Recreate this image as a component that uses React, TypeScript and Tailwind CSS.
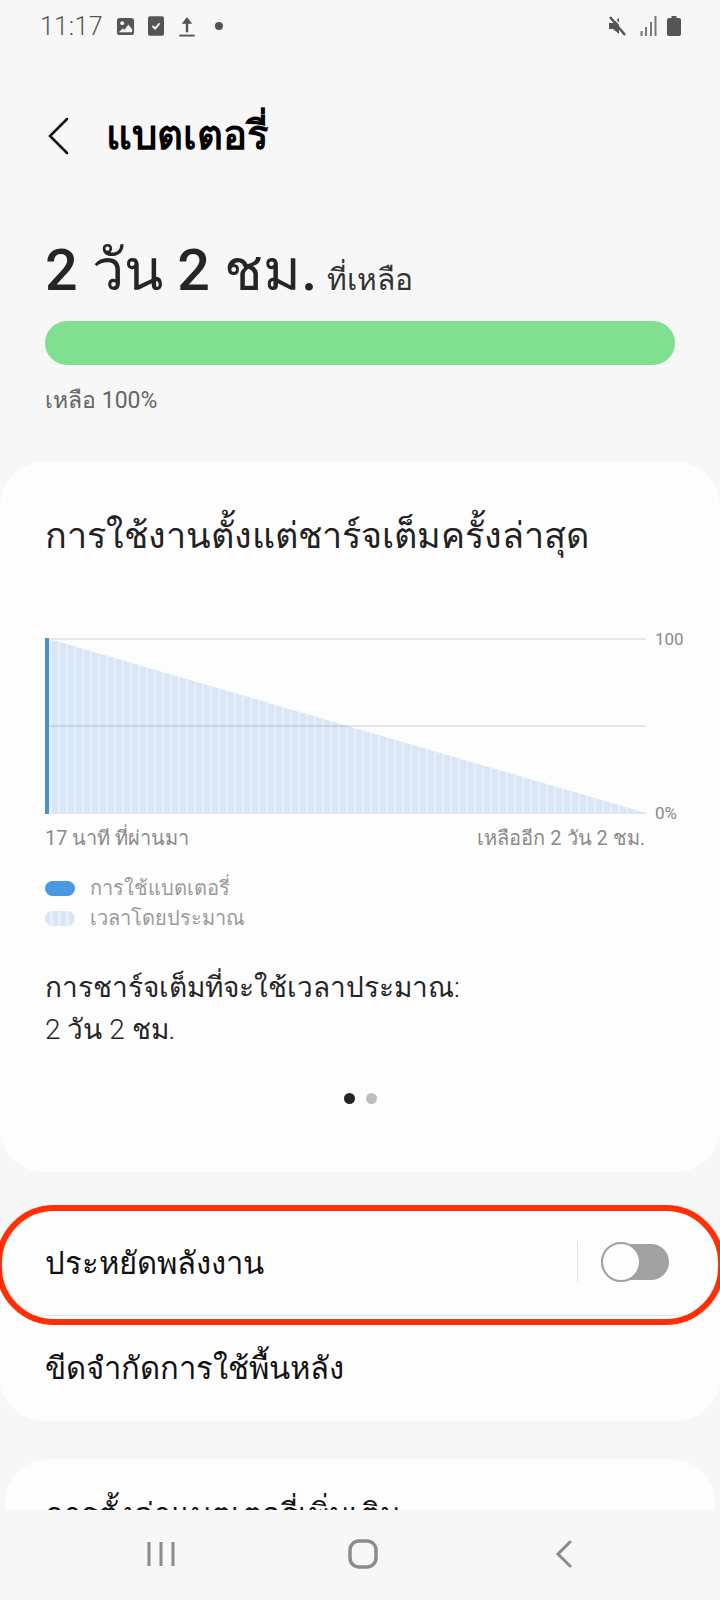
const stripes = Array.from({ length: 76 }, (_, i) => 50 + i * 8);

function StatusBar() {
  return (
    <div className="flex h-[52px] items-center justify-between pl-[40px] pr-[39px] text-[#555555]">
      <div className="flex items-center">
        <span className="text-[25px] font-light leading-none tracking-[0.5px]">11:17</span>
        <svg className="ml-[13px]" width="19" height="19" viewBox="0 0 20 20">
          <rect x="1" y="1" width="18" height="18" rx="3" fill="#555555" />
          <circle cx="6.5" cy="6.5" r="2" fill="#f7f7f7" />
          <path d="M3 16l4-4 2 1.5L13 8l4 5v3z" fill="#f7f7f7" />
        </svg>
        <svg className="ml-[13px]" width="16" height="20" viewBox="0 0 18 22">
          <rect x="0" y="0" width="18" height="22" rx="2" fill="#555555" />
          <path d="M5 11l3 3 5-6" fill="none" stroke="#f7f7f7" strokeWidth="2" />
        </svg>
        <svg className="ml-[15px]" width="16" height="21" viewBox="0 0 16 22">
          <path d="M8 1l5.500 7H9.300v9H6.700V8H2.500z" fill="#555555" />
          <rect x="0" y="19.500" width="16" height="2" fill="#555555" />
        </svg>
        <span className="ml-[20px] size-[8px] rounded-full bg-[#555555]" />
      </div>
      <div className="flex items-center">
        <svg width="20" height="20" viewBox="0 0 20 20">
          <path d="M1 7h4l6-5v16l-6-5H1z" fill="#555555" />
          <path d="M2 1l15 18" stroke="#555555" strokeWidth="2.500" />
          <path d="M4.500 0l15 18" stroke="#f7f7f7" strokeWidth="1.500" />
        </svg>
        <svg className="ml-[12px]" width="17" height="20" viewBox="0 0 17 20">
          <rect x="0.500" y="15" width="2" height="5" fill="#777777" />
          <rect x="5" y="11" width="2" height="9" fill="#777777" />
          <rect x="10" y="6" width="2" height="14" fill="#777777" />
          <rect x="14.500" y="0" width="2" height="20" fill="#777777" />
        </svg>
        <svg className="ml-[10px]" width="14" height="20" viewBox="0 0 14 20">
          <path d="M4.500 0h5v2H12a2 2 0 0 1 2 2v14a2 2 0 0 1-2 2H2a2 2 0 0 1-2-2V4a2 2 0 0 1 2-2h2.500z" fill="#555555" />
        </svg>
      </div>
    </div>
  );
}

function BatteryChart() {
  return (
    <svg className="block" width="684" height="196" viewBox="0 0 684 196">
      <defs>
        <clipPath id="wedge">
          <polygon points="4,10 601,184 4,184" />
        </clipPath>
      </defs>
      <line x1="0" y1="10" x2="601" y2="10" stroke="#e6e6e6" strokeWidth="2" />
      <line x1="0" y1="184" x2="601" y2="184" stroke="#e6e6e6" strokeWidth="2" />
      <polygon points="4,10 601,184 4,184" fill="#d8e6f6" />
      <g clipPath="url(#wedge)">
        {stripes.map((x) => (
          <rect key={x} x={x - 45} y="0" width="2" height="190" fill="#e7f0fa" />
        ))}
      </g>
      <line x1="0" y1="97" x2="601" y2="97" stroke="#000000" strokeOpacity="0.09" strokeWidth="2" />
      <rect x="0" y="9" width="4" height="176" fill="#4e8fd0" />
      <text x="610" y="16" fontSize="17" fill="#8a8a8a">100</text>
      <text x="610" y="190" fontSize="17" fill="#8a8a8a">0%</text>
    </svg>
  );
}

export default function App() {
  return (
    <div className="flex h-[1600px] w-[720px] flex-col overflow-hidden bg-[#f7f7f7]" style={{ fontFamily: 'Roboto, "Noto Sans", sans-serif' }}>
      <StatusBar />

      <div className="relative min-h-0 flex-1 overflow-hidden">
        {/* Title */}
        <div className="flex h-[168px] items-center pl-[46px]">
          <svg width="24" height="38" viewBox="0 0 24 38">
            <path d="M21 2L4 19l17 17" fill="none" stroke="#111111" strokeWidth="2.500" strokeLinecap="round" />
          </svg>
          <h1 className="ml-[36px] text-[40px] font-bold leading-none text-black">แบตเตอรี่</h1>
        </div>

        {/* Remaining time */}
        <div className="px-[45px] pt-[11px]">
          <div className="flex items-baseline text-[#252525]">
            <span className="text-[57.5px] font-medium leading-[80px]">2 วัน 2 ชม.</span>
            <span className="ml-[10px] text-[30px] text-[#333333]">ที่เหลือ</span>
          </div>
          <div className="mt-[10px] h-[44px] w-[630px] rounded-full bg-[#80df90]" />
          <p className="mt-[23px] text-[23px] leading-[26px] text-[#666666]">เหลือ 100%</p>
        </div>

        {/* Usage card */}
        <div className="mt-[48px] h-[710px] rounded-[44px] bg-[#fdfdfd] pl-[45px] pt-[52px]">
          <h2 className="text-[36px] font-light leading-[44px] text-[#222222]">การใช้งานตั้งแต่ชาร์จเต็มครั้งล่าสุด</h2>
          <div className="mt-[71px]">
            <BatteryChart />
          </div>
          <div className="flex w-[600px] justify-between text-[20px] leading-[26px] text-[#8a8a8a]">
            <span>17 นาที ที่ผ่านมา</span>
            <span>เหลืออีก 2 วัน 2 ชม.</span>
          </div>
          <div className="mt-[23px] flex flex-col gap-[2px] text-[20px] leading-[28px] text-[#9a9a9a]">
            <div className="flex items-center gap-[15px]">
              <span className="h-[15px] w-[30px] rounded-full bg-[#4a97e2]" />
              การใช้แบตเตอรี่
            </div>
            <div className="flex items-center gap-[15px]">
              <span className="h-[15px] w-[30px] rounded-full bg-[repeating-linear-gradient(90deg,#d8e6f6_0,#d8e6f6_5px,#e7f0fa_5px,#e7f0fa_8px)]" />
              เวลาโดยประมาณ
            </div>
          </div>
          <p className="mt-[35px] text-[28px] font-light leading-[42px] text-[#252525]">
            การชาร์จเต็มที่จะใช้เวลาประมาณ:
            <br />
            2 วัน 2 ชม.
          </p>
          <div className="mt-[42px] flex w-[630px] justify-center gap-[11px]">
            <span className="size-[11px] rounded-full bg-[#252525]" />
            <span className="size-[11px] rounded-full bg-[#bdbdbd]" />
          </div>
        </div>

        {/* Power saving */}
        <div className="relative mt-[36px] h-[213px] rounded-[44px] bg-[#fdfdfd]">
          <div className="mx-[34px] flex h-[108px] items-center border-b border-[#e4e4e4] pl-[11px] pr-[17px]">
            <span className="flex-1 pt-[6px] text-[31px] font-light text-[#111111]">ประหยัดพลังงาน</span>
            <span className="mr-[23px] h-[40px] w-[1px] bg-[#e2e2e2]" />
            <span className="relative h-[36px] w-[68px] rounded-full bg-[#a2a2a2]">
              <span className="absolute left-0 top-[-2px] size-[40px] rounded-full border-2 border-[#a2a2a2] bg-[#fdfdfd]" />
            </span>
          </div>
          <div className="flex h-[103px] items-center pl-[45px] pt-[4px] text-[31px] font-light text-[#111111]">ขีดจำกัดการใช้พื้นหลัง</div>
          <div className="pointer-events-none absolute left-[-4px] right-[-4px] top-[-3px] h-[120px] rounded-[58px] border-[6px] border-[#ff3008]" />
        </div>

        <div className="mx-[5px] mt-[38px] h-[120px] rounded-[44px] bg-[#fdfdfd] pl-[40px] pt-[34px] text-[31px] font-light leading-[44px] text-[#111111]">
          การตั้งค่าแบตเตอรี่เพิ่มเติม
        </div>
      </div>

      {/* Nav bar */}
      <div className="flex h-[90px] items-center bg-[#f7f7f7] pb-[2px] pl-[147px]">
        <svg width="28" height="28" viewBox="0 0 28 28">
          <path d="M2 2v24M14 2v24M26 2v24" stroke="#8c8c8c" strokeWidth="3" />
        </svg>
        <svg className="ml-[173px]" width="30" height="30" viewBox="0 0 30 30">
          <rect x="2" y="2" width="26" height="26" rx="9" fill="none" stroke="#8c8c8c" strokeWidth="3.500" />
        </svg>
        <svg className="ml-[177px]" width="18" height="28" viewBox="0 0 18 28">
          <path d="M15 2L3 14l12 12" fill="none" stroke="#8c8c8c" strokeWidth="3" strokeLinecap="round" />
        </svg>
      </div>
    </div>
  );
}
